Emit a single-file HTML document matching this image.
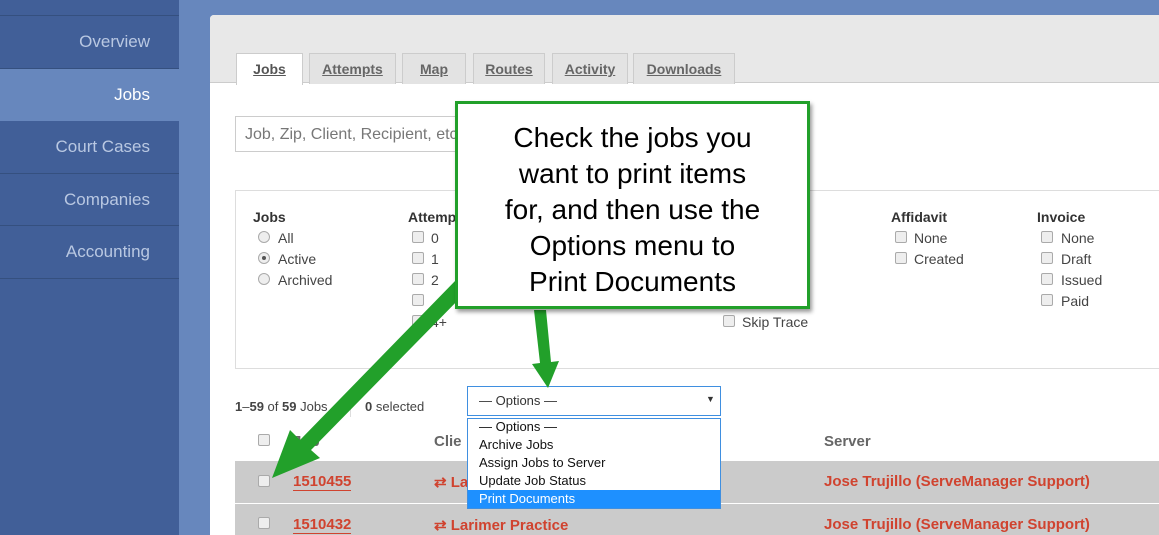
<!DOCTYPE html>
<html><head><style>
*{box-sizing:border-box;margin:0;padding:0}
body{width:1159px;height:535px;overflow:hidden;background:#6787bd;font-family:"Liberation Sans",Arial,sans-serif;position:relative}
.side{position:absolute;left:0;top:0;width:179px;height:535px;background:#415f98}
.si{position:absolute;left:0;width:179px;border-bottom:1px solid #35507f;color:#b9c8e2;font-size:17px;text-align:right;padding-right:29px}
.si.act{background:#6787bd;color:#fff;width:179px;border:none}
.panel{position:absolute;left:210px;top:15px;right:0;bottom:0;background:#fff;border-radius:4px 0 0 0}
.phead{position:absolute;left:210px;top:15px;right:0;height:68px;background:#e8e8e8;border-bottom:1px solid #ccc;border-radius:4px 0 0 0}
.tab{position:absolute;top:53px;height:31px;border:1px solid #ccc;border-bottom:none;background:#e3e3e3;color:#666;font-weight:bold;font-size:14px;text-align:center;line-height:30px;text-decoration:underline}
.tab.on{background:#fff;height:32px;color:#555}
.t{position:absolute;font-size:14px;color:#444;white-space:nowrap}
.b{font-weight:bold;color:#333}
.cb{position:absolute;width:12px;height:12px;border:1px solid #aaa;border-radius:2px;background:#eee}
.rd{position:absolute;width:12px;height:12px;border:1px solid #aaa;border-radius:50%;background:#eee}
.red{color:#d0432f;font-weight:bold;font-size:15px}
</style></head><body>
<div class="side">
<div class="si" style="top:0;height:16px"></div>
<div class="si" style="top:16px;height:53px;line-height:52px">Overview</div>
<div class="si act" style="top:69px;height:52px;line-height:51px">Jobs</div>
<div class="si" style="top:121px;height:53px;line-height:52px">Court Cases</div>
<div class="si" style="top:174px;height:52px;line-height:51px">Companies</div>
<div class="si" style="top:226px;height:53px;line-height:52px">Accounting</div>
</div>
<div class="panel"></div>
<div class="phead"></div>
<div class="tab on" style="left:236px;width:67px">Jobs</div>
<div class="tab" style="left:309px;width:87px">Attempts</div>
<div class="tab" style="left:402px;width:64px">Map</div>
<div class="tab" style="left:473px;width:72px">Routes</div>
<div class="tab" style="left:552px;width:76px">Activity</div>
<div class="tab" style="left:633px;width:102px">Downloads</div>
<div style="position:absolute;left:235px;top:116px;width:300px;height:36px;border:1px solid #ccc;border-right:none"></div>
<div class="t" style="left:245px;top:126px;font-size:16px;color:#777">Job, Zip, Client, Recipient, etc.</div>
<div style="position:absolute;left:235px;top:190px;width:930px;height:179px;border:1px solid #ddd"></div>
<div class="t b" style="left:253px;top:209px">Jobs</div>
<div class="rd" style="left:258px;top:231px"></div><div class="t" style="left:278px;top:230px">All</div>
<div class="rd" style="left:258px;top:252px"></div><div style="position:absolute;left:262px;top:256px;width:4px;height:4px;border-radius:50%;background:#555"></div><div class="t" style="left:278px;top:251px">Active</div>
<div class="rd" style="left:258px;top:273px"></div><div class="t" style="left:278px;top:272px">Archived</div>
<div class="t b" style="left:408px;top:209px">Attemp</div>
<div class="cb" style="left:412px;top:231px"></div><div class="t" style="left:431px;top:230px">0</div>
<div class="cb" style="left:412px;top:252px"></div><div class="t" style="left:431px;top:251px">1</div>
<div class="cb" style="left:412px;top:273px"></div><div class="t" style="left:431px;top:272px">2</div>
<div class="cb" style="left:412px;top:294px"></div>
<div class="cb" style="left:412px;top:315px"></div><div class="t" style="left:431px;top:314px">4+</div>
<div class="cb" style="left:723px;top:315px"></div><div class="t" style="left:742px;top:314px">Skip Trace</div>
<div class="t b" style="left:891px;top:209px">Affidavit</div>
<div class="cb" style="left:895px;top:231px"></div><div class="t" style="left:914px;top:230px">None</div>
<div class="cb" style="left:895px;top:252px"></div><div class="t" style="left:914px;top:251px">Created</div>
<div class="t b" style="left:1037px;top:209px">Invoice</div>
<div class="cb" style="left:1041px;top:231px"></div><div class="t" style="left:1061px;top:230px">None</div>
<div class="cb" style="left:1041px;top:252px"></div><div class="t" style="left:1061px;top:251px">Draft</div>
<div class="cb" style="left:1041px;top:273px"></div><div class="t" style="left:1061px;top:272px">Issued</div>
<div class="cb" style="left:1041px;top:294px"></div><div class="t" style="left:1061px;top:293px">Paid</div>
<div class="t" style="left:235px;top:399px;font-size:13px"><b>1</b>–<b>59</b> of <b>59</b> Jobs</div>
<div style="position:absolute;left:350px;top:395px;width:1px;height:22px;background:#ddd"></div>
<div class="t" style="left:365px;top:399px;font-size:13px"><b>0</b> selected</div>
<div class="cb" style="left:258px;top:434px"></div>
<div class="t b" style="left:293px;top:433px;color:#666;font-size:15px">Job</div>
<div class="t b" style="left:434px;top:433px;color:#666;font-size:15px">Clie</div>
<div class="t b" style="left:824px;top:433px;color:#666;font-size:15px">Server</div>
<div style="position:absolute;left:235px;top:461px;right:0;height:42px;background:#cbcbcb"></div>
<div style="position:absolute;left:235px;top:504px;right:0;height:31px;background:#cbcbcb"></div>
<div class="cb" style="left:258px;top:475px"></div>
<div class="t red" style="left:293px;top:473px;border-bottom:1px solid #d0432f">1510455</div>
<div class="t red" style="left:434px;top:473px">⇄ La</div>
<div class="t red" style="left:824px;top:473px">Jose Trujillo (ServeManager Support)</div>
<div class="cb" style="left:258px;top:517px"></div>
<div class="t red" style="left:293px;top:516px;border-bottom:1px solid #d0432f">1510432</div>
<div class="t red" style="left:434px;top:516px">⇄ Larimer Practice</div>
<div class="t red" style="left:824px;top:516px">Jose Trujillo (ServeManager Support)</div>
<div style="position:absolute;left:467px;top:386px;width:254px;height:30px;border:1px solid #3f8fe0;background:#fff"></div>
<div class="t" style="left:479px;top:393px;font-size:13px;color:#333">— Options —</div>
<div class="t" style="left:706px;top:394px;font-size:9px;color:#333">▼</div>
<div style="position:absolute;left:467px;top:418px;width:254px;height:91px;border:1px solid #3f8fe0;background:#fff"></div>
<div class="t" style="left:479px;top:419px;font-size:13px;color:#111">— Options —</div>
<div class="t" style="left:479px;top:437px;font-size:13px;color:#111">Archive Jobs</div>
<div class="t" style="left:479px;top:455px;font-size:13px;color:#111">Assign Jobs to Server</div>
<div class="t" style="left:479px;top:473px;font-size:13px;color:#111">Update Job Status</div>
<div style="position:absolute;left:468px;top:490px;width:252px;height:18px;background:#1e90ff"></div>
<div class="t" style="left:479px;top:491px;font-size:13px;color:#fff">Print Documents</div>
<svg style="position:absolute;left:0;top:0" width="1159" height="535">
<g fill="#22a02a">
<polygon points="534,310 546,310 551,362 559,361 548,388 532,364 540,363"/>
<polygon points="456,280 466,292 311,450 320,458 272,478 290,430 300,440"/>
</g>
</svg>
<div style="position:absolute;left:455px;top:101px;width:355px;height:208px;border:3px solid #22a02a;background:#fff;box-shadow:2px 3px 4px rgba(0,0,0,.4);text-align:center;font-size:28px;line-height:36px;color:#000;padding-top:16px">Check the jobs you<br>want to print items<br>for, and then use the<br>Options menu to<br>Print Documents</div>
</body></html>
